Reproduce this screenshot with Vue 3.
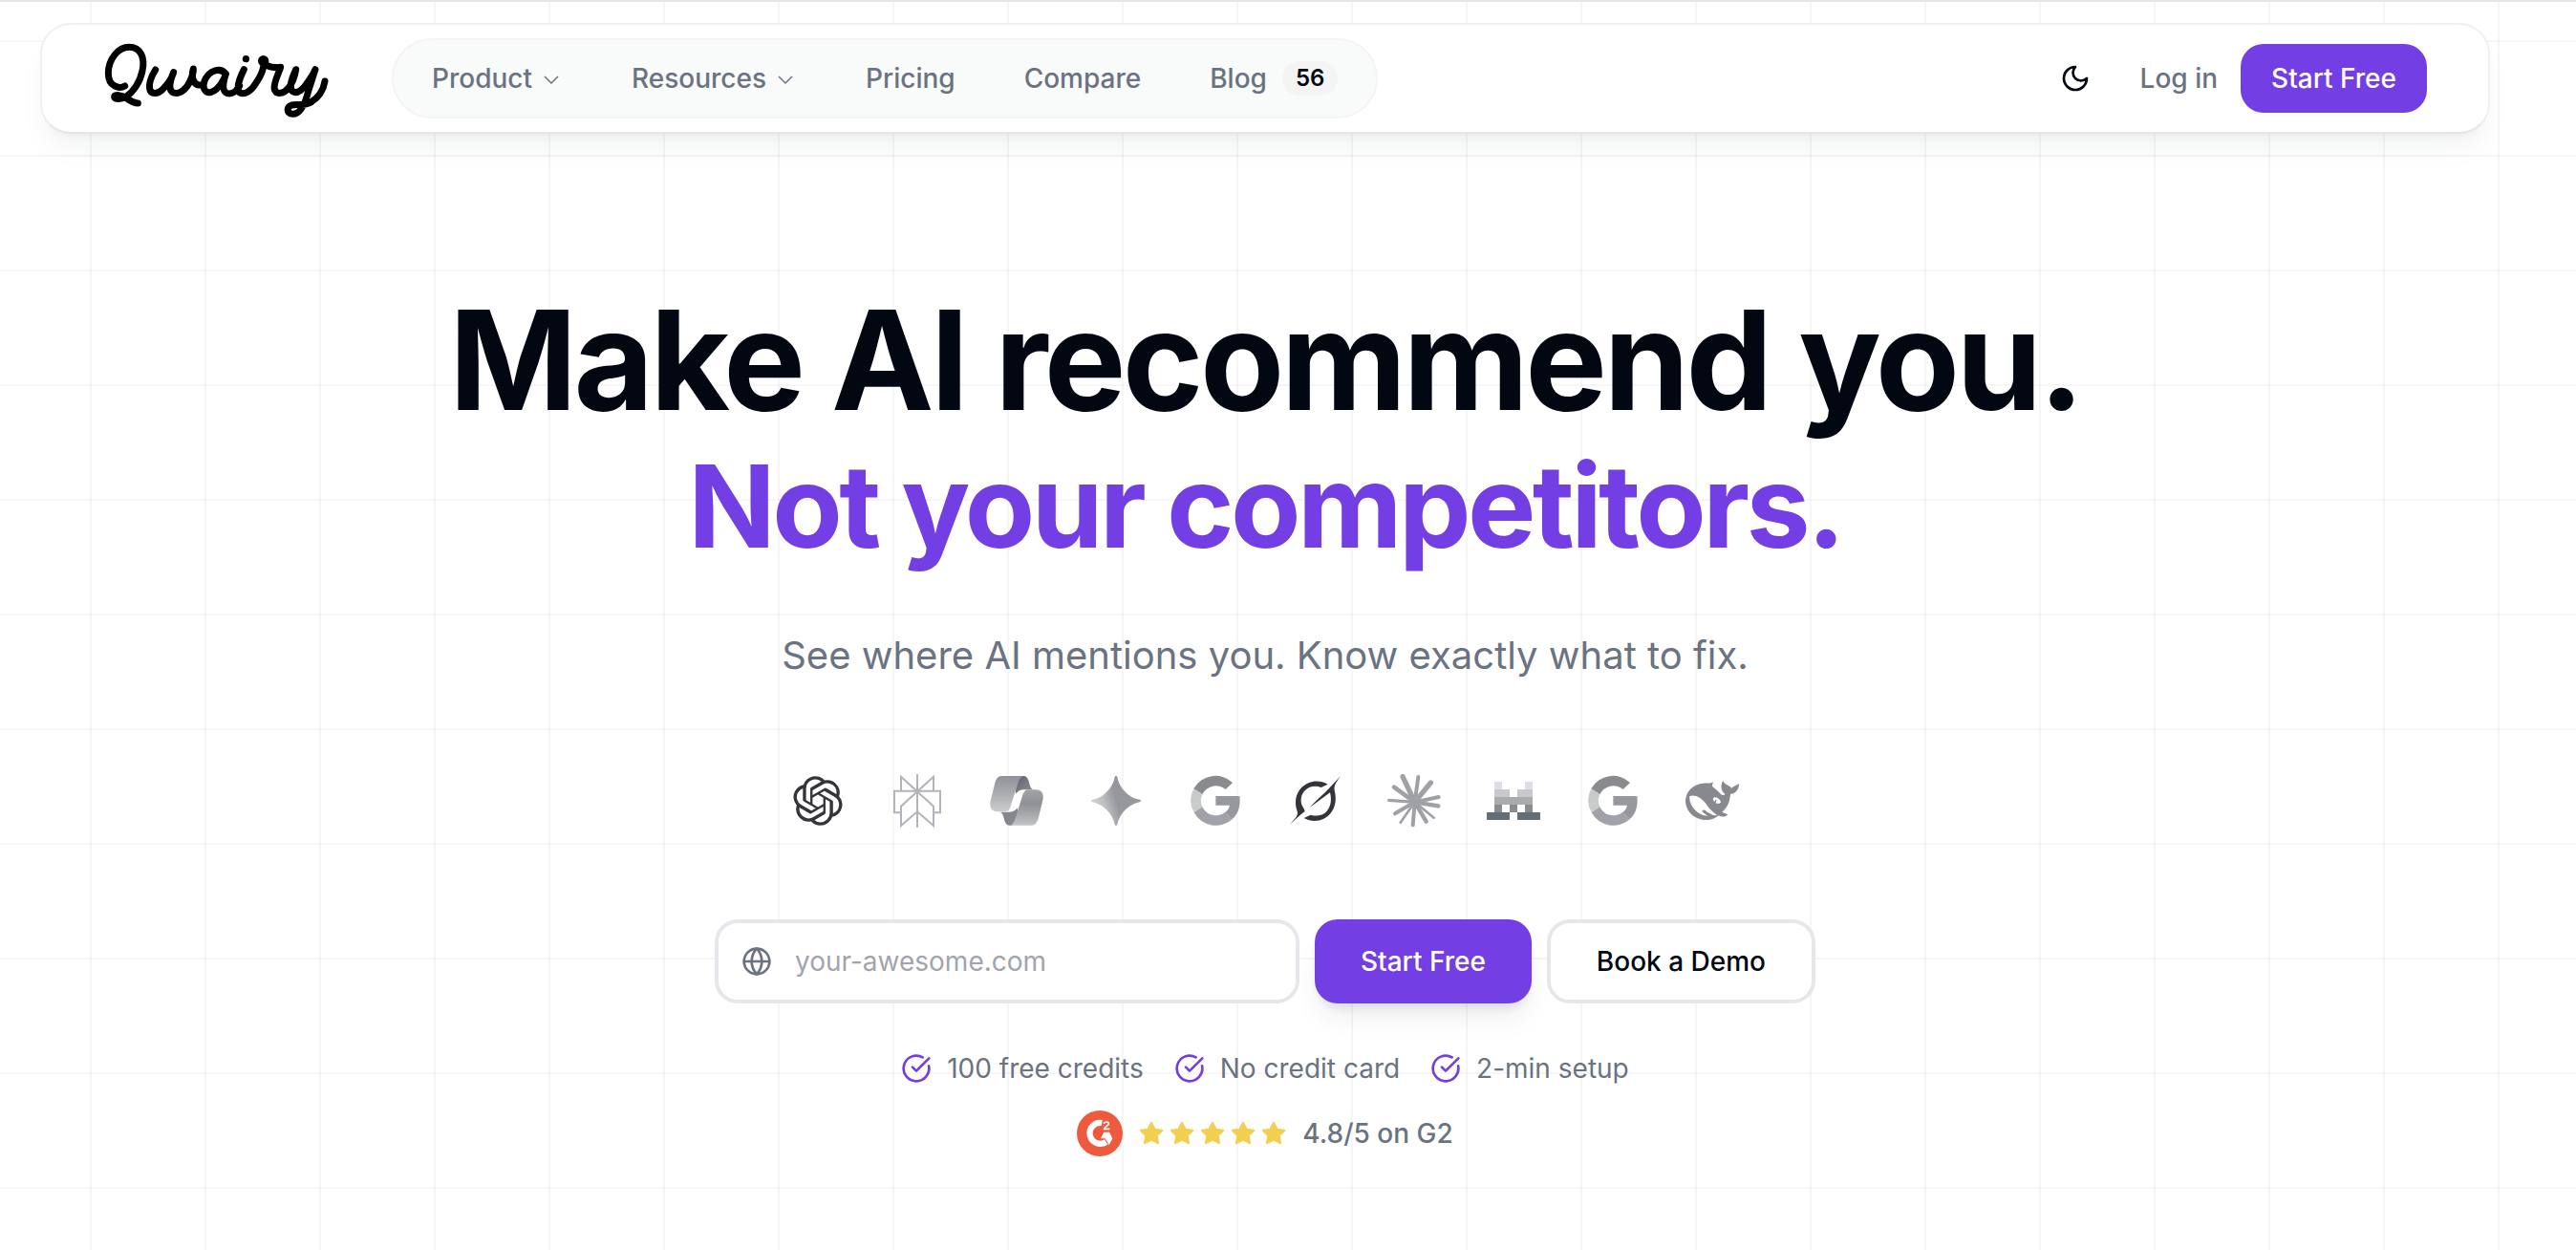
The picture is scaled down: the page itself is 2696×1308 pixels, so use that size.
<template>
  <div class="page">
    <header class="navbar">
      <a href="#" class="brand" aria-label="Qwairy">
        <svg viewBox="324 123 714 246" class="brand-logo" aria-hidden="true">
          <g class="brand-strokes">
            <path d="M392 270C376 279 340 274 340 230C340 185 372 148 405 148C442 148 456 182 447 222C440 258 418 288 398 302C382 312 359 314 359 304C359 296 382 297 398 309C411 318 424 324 433 324" />
            <path d="M488 219C474 242 467 264 470 279C474 299 497 294 510 281C525 266 540 246 545 227C534 252 526 284 545 291C566 298 588 276 597 254C604 238 608 226 607 216C600 240 606 270 632 267" />
            <path d="M709 232C692 210 656 220 642 254C634 280 646 294 664 289C688 280 704 250 709 232C702 254 694 286 714 293C730 297 744 284 752 270" />
            <path d="M766 218C755 240 740 278 752 290C768 300 790 284 804 260C822 234 830 212 828 192C834 212 858 213 881 211C872 238 857 264 862 281C868 299 892 294 906 276C918 260 926 238 929 218C916 246 906 274 919 287C934 297 954 278 966 258C978 242 986 228 990 218L968 286C956 334 940 359 918 358C899 356 899 336 916 330C932 326 950 334 976 321C1004 304 1016 280 1020 255" />
          </g>
          <circle cx="772" cy="185" r="11" />
          <circle cx="827" cy="191" r="17" />
        </svg>
      </a>

      <nav class="menu">
        <a v-for="item in menuItems" :key="item.label" href="#" class="menu-item">
          {{ item.label }}
          <svg v-if="item.hasChildren" viewBox="0 0 24 24" class="chevron" aria-hidden="true">
            <path d="m5 10 7 7 7-7" />
          </svg>
          <span v-if="item.count" class="count">{{ item.count }}</span>
        </a>
      </nav>

      <div class="actions">
        <button type="button" class="theme-toggle" aria-label="Toggle theme">
          <svg viewBox="0 0 24 24" class="icon" aria-hidden="true">
            <path d="M12 3a6 6 0 0 0 9 9 9 9 0 1 1-9-9Z" />
          </svg>
        </button>
        <a href="#" class="login">Log in</a>
        <button type="button" class="btn btn-primary btn-nav">Start Free</button>
      </div>
    </header>

    <main class="hero">
      <h1 class="headline">
        <span class="headline-main">Make AI recommend you.</span>
        <span class="headline-accent">Not your competitors.</span>
      </h1>
      <p class="subtitle">See where AI mentions you. Know exactly what to fix.</p>

      <div class="engines">
        <!-- OpenAI -->
        <svg viewBox="-1 -1 26 26" class="engine" aria-hidden="true">
          <path fill="#34353b" d="M22.2819 9.8211a5.9847 5.9847 0 0 0-.5157-4.9108 6.0462 6.0462 0 0 0-6.5098-2.9A6.0651 6.0651 0 0 0 4.9807 4.1818a5.9847 5.9847 0 0 0-3.9977 2.9 6.0462 6.0462 0 0 0 .7427 7.0966 5.98 5.98 0 0 0 .511 4.9107 6.051 6.051 0 0 0 6.5146 2.9001A5.9847 5.9847 0 0 0 13.2599 24a6.0557 6.0557 0 0 0 5.7718-4.2058 5.9894 5.9894 0 0 0 3.9977-2.9001 6.0557 6.0557 0 0 0-.7475-7.0729zm-9.022 12.6081a4.4755 4.4755 0 0 1-2.8764-1.0408l.1419-.0804 4.7783-2.7582a.7948.7948 0 0 0 .3927-.6813v-6.7369l2.02 1.1686a.071.071 0 0 1 .038.052v5.5826a4.504 4.504 0 0 1-4.4945 4.4944zm-9.6607-4.1254a4.4708 4.4708 0 0 1-.5346-3.0137l.142.0852 4.783 2.7582a.7712.7712 0 0 0 .7806 0l5.8428-3.3685v2.3324a.0804.0804 0 0 1-.0332.0615L9.74 19.9502a4.4992 4.4992 0 0 1-6.1408-1.6464zM2.3408 7.8956a4.485 4.485 0 0 1 2.3655-1.9728V11.6a.7664.7664 0 0 0 .3879.6765l5.8144 3.3543-2.0201 1.1685a.0757.0757 0 0 1-.071 0l-4.8303-2.7865A4.504 4.504 0 0 1 2.3408 7.872zm16.5963 3.8558L13.1038 8.364 15.1192 7.2a.0757.0757 0 0 1 .071 0l4.8303 2.7913a4.4944 4.4944 0 0 1-.6765 8.1042v-5.6772a.79.79 0 0 0-.407-.667zm2.0107-3.0231l-.142-.0852-4.7735-2.7818a.7759.7759 0 0 0-.7854 0L9.409 9.2297V6.8974a.0662.0662 0 0 1 .0284-.0615l4.8303-2.7866a4.4992 4.4992 0 0 1 6.6802 4.66zM8.3065 12.863l-2.02-1.1638a.0804.0804 0 0 1-.038-.0567V6.0742a4.4992 4.4992 0 0 1 7.3757-3.4537l-.142.0805L8.704 5.459a.7948.7948 0 0 0-.3927.6813zm1.0976-2.3654l2.602-1.4998 2.6069 1.4998v2.9994l-2.5974 1.4997-2.6067-1.4997Z" />
        </svg>

        <!-- Perplexity -->
        <svg viewBox="366 60 168 168" class="engine" aria-hidden="true">
          <path fill="none" stroke="#b3b4ba" stroke-width="6" d="M450 60V228M399 113V68L450 115L501 68V113M398 181H378V113H522V181H502M450 115L399 161V222L450 178L501 222V161Z" />
        </svg>

        <!-- Copilot -->
        <svg viewBox="678 60 168 168" class="engine" aria-hidden="true">
          <defs>
            <linearGradient id="ribbonLeft" x1="0" y1="0" x2="0" y2="1">
              <stop offset="0" stop-color="#909297" />
              <stop offset="0.5" stop-color="#abadb1" />
              <stop offset="1" stop-color="#cbcccc" />
            </linearGradient>
            <linearGradient id="ribbonRight" x1="0" y1="0" x2="0" y2="1">
              <stop offset="0" stop-color="#a3a4a8" />
              <stop offset="0.4" stop-color="#8f9095" />
              <stop offset="1" stop-color="#c2c3c5" />
            </linearGradient>
            <linearGradient id="ribbonFold" x1="0" y1="0" x2="1" y2="1">
              <stop offset="0" stop-color="#5a5f6b" />
              <stop offset="1" stop-color="#94969b" />
            </linearGradient>
          </defs>
          <path fill="url(#ribbonFold)" d="M776 66H784C799 67 800 84 804 97C807 106 811 108 816 109H784C774 109 766 113 760 122L756 100Z" />
          <path fill="#85878c" d="M748 221H740C725 220 724 204 720 191C717 182 713 180 708 179H740C750 179 758 175 764 166L768 188Z" />
          <path fill="url(#ribbonLeft)" d="M715 66H784C770 69 766 88 760 108L744 158C739 173 735 178 722 178H702C682 178 676 164 680 145L692 95C697 76 702 66 715 66Z" />
          <path fill="url(#ribbonRight)" d="M809 221H740C754 218 758 199 764 179L780 129C785 114 789 109 802 109H822C842 109 848 123 844 142L832 192C827 211 822 221 809 221Z" />
        </svg>

        <!-- Gemini -->
        <svg viewBox="0 60 168 168" class="engine" aria-hidden="true">
          <defs>
            <linearGradient id="spark" x1="0" y1="0.6" x2="1" y2="0.3">
              <stop offset="0" stop-color="#d2d3d2" />
              <stop offset="0.25" stop-color="#bfc0c1" />
              <stop offset="0.5" stop-color="#96979c" />
              <stop offset="1" stop-color="#98999e" />
            </linearGradient>
          </defs>
          <path fill="url(#spark)" d="M84 66C88 66 89 71 90 77C97 105 123 131 152 139C158 140 162 141 162 144C162 147 158 148 152 149C123 157 97 183 90 211C89 217 88 222 84 222C80 222 79 217 78 211C71 183 45 157 16 149C10 148 6 147 6 144C6 141 10 140 16 139C45 131 71 105 78 77C79 71 80 66 84 66Z" />
        </svg>

        <!-- Google -->
        <svg viewBox="312 60 168 168" class="engine" aria-hidden="true">
          <path v-for="part in googleParts" :key="part.fill" :fill="part.fill" :d="part.d" />
        </svg>

        <!-- Grok -->
        <svg viewBox="624 60 168 168" class="engine" aria-hidden="true">
          <path fill="#34353b" d="M630 218C641 204 658 192 653 177C643 150 648 122 666 103C688 80 722 76 749 92L728 102C708 94 688 99 675 114C661 131 662 154 675 170L677 177C660 190 645 204 630 218Z" />
          <path fill="#34353b" d="M789 66C778 82 767 95 770 110C777 140 774 162 757 184C738 208 702 214 674 198L695 188C714 194 734 190 746 176C758 162 762 142 756 118L692 165C712 143 738 121 752 106Z" />
        </svg>

        <!-- Claude -->
        <svg viewBox="36 30 168 168" class="engine" aria-hidden="true">
          <g stroke="#9fa1a6" stroke-linecap="round">
            <line v-for="(ray, i) in claudeRays" :key="i" x1="122" y1="118" :x2="ray[0]" :y2="ray[1]" :stroke-width="ray[2]" />
          </g>
        </svg>

        <!-- Mistral -->
        <svg viewBox="228 60 168 168" class="engine" aria-hidden="true" shape-rendering="crispEdges">
          <path fill="#dfdde8" d="M252 84h24v24h-24zM348 84h24v24h-24z" />
          <path fill="#c8c9c8" d="M252 108h48v24h-48zM324 108h48v24h-48z" />
          <path fill="#a9abaf" d="M252 132h120v24h-120z" />
          <path fill="#8b8c90" d="M252 156h24v24h-24zM300 156h24v24h-24zM348 156h24v24h-24z" />
          <path fill="#666c78" d="M228 180h72v24h-72zM324 180h72v24h-72z" />
        </svg>

        <!-- Google AI -->
        <svg viewBox="312 60 168 168" class="engine" aria-hidden="true">
          <path v-for="part in googleParts" :key="part.fill" :fill="part.fill" :d="part.d" />
        </svg>

        <!-- DeepSeek -->
        <svg viewBox="852 60 168 168" class="engine" aria-hidden="true">
          <path fill="#88898e" d="M940 83C936 90 922 87 908 89C876 92 852 115 852 146C854 180 884 206 921 204C937 203 947 198 956 190C966 196 979 195 985 187C980 183 972 183 967 179C983 166 992 146 993 123C1008 121 1020 110 1020 90C1012 97 1003 96 997 104C990 95 974 93 970 81C961 96 963 113 976 122C974 127 968 128 962 122C954 113 944 106 937 99C934 94 938 90 940 83Z" />
          <path fill="#ffffff" d="M865 129C885 122 907 138 921 160C929 173 942 182 951 189C940 193 930 182 920 179C914 172 907 170 904 176C909 182 916 186 922 192C890 190 861 158 865 129Z" />
          <path fill="#ffffff" d="M940 134C948 130 961 138 963 148C960 155 950 153 946 150C949 147 950 143 949 140C946 140 944 143 944 147C939 143 937 138 940 134Z" />
        </svg>
      </div>

      <form class="signup" @submit.prevent>
        <label class="domain-field">
          <svg viewBox="0 0 24 24" class="icon" aria-hidden="true">
            <circle cx="12" cy="12" r="10" />
            <path d="M12 2a14.5 14.5 0 0 0 0 20 14.5 14.5 0 0 0 0-20M2 12h20" />
          </svg>
          <input
            v-model="domain"
            type="text"
            class="domain-input"
            placeholder="your-awesome.com"
            aria-label="Your website"
          />
        </label>
        <button type="submit" class="btn btn-primary btn-large">Start Free</button>
        <button type="button" class="btn btn-outline">Book a Demo</button>
      </form>

      <ul class="perks">
        <li v-for="perk in perks" :key="perk" class="perk">
          <svg viewBox="0 0 24 24" class="icon perk-icon" aria-hidden="true">
            <path d="M21.801 10A10 10 0 1 1 17 3.335" />
            <path d="m9 11 3 3L22 4" />
          </svg>
          {{ perk }}
        </li>
      </ul>

      <div class="rating">
        <svg viewBox="24 36 144 144" class="g2-logo" aria-hidden="true">
          <circle cx="96" cy="108" r="72" fill="#ef5a3e" />
          <path fill="none" stroke="#ffffff" stroke-width="19" d="M103 75A33 33 0 1 0 116 135" />
          <path fill="#ffffff" d="M109 104H126L136 124L125 145L113 124H99Z" />
          <path fill="none" stroke="#ffffff" stroke-width="5" d="M109 78C110 70 125 70 124 78C123 84 111 87 110 94H127" />
        </svg>
        <div class="stars">
          <svg v-for="n in 5" :key="n" viewBox="0 0 24 24" class="star" aria-hidden="true">
            <path d="M12 2.5l2.9 5.900 6.600.9-4.800 4.600 1.200 6.600-5.900-3.200-5.900 3.200 1.200-6.600L2.500 9.300l6.600-.9z" />
          </svg>
        </div>
        <span class="rating-text">4.8/5 on G2</span>
      </div>
    </main>
  </div>
</template>

<script setup>
import { ref } from 'vue'

const domain = ref('')

const menuItems = [
  { label: 'Product', hasChildren: true },
  { label: 'Resources', hasChildren: true },
  { label: 'Pricing' },
  { label: 'Compare' },
  { label: 'Blog', count: 56 }
]

const perks = ['100 free credits', 'No credit card', '2-min setup']

const googleParts = [
  { fill: '#8a8b8f', d: 'M450 87A78 78 0 0 0 328 106L355 124A47 47 0 0 1 428 108Z' },
  { fill: '#c9caca', d: 'M328 106A78 78 0 0 0 329 181L355 163A47 47 0 0 1 355 124Z' },
  { fill: '#a0a2a7', d: 'M329 181A78 78 0 0 0 450 201L425 181A47 47 0 0 1 355 163Z' },
  { fill: '#97989d', d: 'M397 129H472C475 152 472 181 450 201L425 181C433 176 439 168 441 158H397Z' }
]

// [x, y, thickness] of each ray's outer end
const claudeRays = [
  [84, 38, 16],
  [57, 71, 14],
  [133, 39, 12],
  [172, 57, 16],
  [197, 102, 12],
  [196, 130, 13],
  [182, 167, 8],
  [158, 179, 13],
  [116, 190, 12],
  [77, 182, 8],
  [60, 154, 12],
  [41, 112, 10]
]
</script>

<style>
body {
  margin: 0;
  background: #FFFFFF;
}
</style>

<style scoped>
.page {
  box-sizing: border-box;
  min-height: 100vh;
  padding: 22px 48px 96px 0;
  border-top: 2px solid #E5E5EC;
  font-family: Inter, "Liberation Sans", sans-serif;
  font-size: 28px;
  line-height: 40px;
  color: #030711;
  background-color: #FFFFFF;
  background-image:
    linear-gradient(to right, rgba(0, 0, 20, 0.035) 2px, transparent 2px),
    linear-gradient(to bottom, rgba(0, 0, 20, 0.035) 2px, transparent 2px);
  background-size: 120px 120px;
  background-position: 94px 40px;
}

a {
  color: inherit;
  text-decoration: none;
}

button,
input {
  font: inherit;
}

.icon {
  width: 32px;
  height: 32px;
  flex-shrink: 0;
  fill: none;
  stroke: currentColor;
  stroke-width: 2;
  stroke-linecap: round;
  stroke-linejoin: round;
}

/* navbar */
.navbar {
  box-sizing: border-box;
  display: flex;
  align-items: center;
  max-width: 2564px;
  min-height: 116px;
  margin: 0 auto;
  padding: 0 64px;
  background: #FFFFFF;
  border: 2px solid #F0F0F2;
  border-bottom-color: #E5E5EC;
  border-radius: 32px;
  box-shadow: 0 20px 30px -6px rgba(20, 40, 30, 0.05), 0 8px 12px -8px rgba(0, 0, 0, 0.07);
}

.brand {
  display: flex;
  margin-right: 64px;
}

.brand-logo {
  width: 238px;
  height: 82px;
}

.brand-strokes {
  fill: none;
  stroke: #000000;
  stroke-width: 21;
  stroke-linecap: round;
  stroke-linejoin: round;
}

.menu {
  display: flex;
  gap: 8px;
  padding: 8px;
  background: #F9FAFA;
  border: 2px solid #F4F4F5;
  border-radius: 42px;
}

.menu-item {
  display: flex;
  align-items: center;
  gap: 8px;
  padding: 12px 32px;
  font-weight: 500;
  color: #6B7280;
}

.chevron {
  width: 24px;
  height: 24px;
  fill: none;
  stroke: currentColor;
  stroke-width: 1.5;
}

.count {
  margin-left: 8px;
  padding: 2px 14px;
  font-size: 24px;
  line-height: 32px;
  font-weight: 600;
  color: #030711;
  background: #F4F4F4;
  border-radius: 18px;
}

.actions {
  display: flex;
  align-items: center;
  margin-left: auto;
}

.theme-toggle {
  display: flex;
  align-items: center;
  justify-content: center;
  width: 72px;
  height: 72px;
  margin-right: 32px;
  padding: 0;
  color: #030711;
  background: none;
  border: 0;
  border-radius: 24px;
  cursor: pointer;
}

.login {
  margin-right: 24px;
  font-weight: 500;
  color: #6B7280;
}

.btn {
  box-sizing: border-box;
  font-weight: 500;
  border: 0;
  border-radius: 24px;
  cursor: pointer;
  white-space: nowrap;
}

.btn-primary {
  color: #FFFFFF;
  background: #733EE4;
}

.btn-nav {
  height: 72px;
  padding: 0 32px;
}

.btn-large {
  padding: 0 48px;
  box-shadow: 0 20px 30px -6px rgba(20, 40, 30, 0.08), 0 8px 12px -6px rgba(30, 20, 80, 0.14);
}

.btn-outline {
  padding: 0 48px;
  color: #030711;
  background: #FFFFFF;
  border: 4px solid #E5E7EB;
}

/* hero */
.hero {
  display: flex;
  flex-direction: column;
  align-items: center;
  padding-top: 158px;
}

.headline {
  display: flex;
  flex-direction: column;
  align-items: center;
  gap: 8px;
  margin: 0;
  font-size: 144px;
  line-height: 158px;
  font-weight: 700;
  letter-spacing: -0.025em;
  text-align: center;
}

.headline-accent {
  font-size: 120px;
  line-height: 132px;
  color: #733EE4;
}

.subtitle {
  margin: 62px 0 0;
  font-size: 40px;
  line-height: 56px;
  color: #6B7280;
}

.engines {
  display: flex;
  gap: 48px;
  margin-top: 96px;
}

.engine {
  width: 56px;
  height: 56px;
}

.signup {
  display: flex;
  gap: 16px;
  width: 100%;
  max-width: 1152px;
  height: 88px;
  margin-top: 96px;
}

.domain-field {
  box-sizing: border-box;
  display: flex;
  flex: 1;
  align-items: center;
  gap: 24px;
  min-width: 0;
  padding: 0 24px;
  color: #6B7280;
  background: #FFFFFF;
  border: 4px solid #E5E7EB;
  border-radius: 24px;
}

.domain-input {
  flex: 1;
  min-width: 0;
  padding: 0;
  color: #030711;
  background: none;
  border: 0;
  outline: none;
}

.domain-input::placeholder {
  color: #A1A5AB;
  opacity: 1;
}

.perks {
  display: flex;
  gap: 32px;
  margin: 48px 0 0;
  padding: 0;
  list-style: none;
  color: #6B7280;
}

.perk {
  display: flex;
  align-items: center;
  gap: 16px;
}

.perk-icon {
  color: #733EE4;
}

.rating {
  display: flex;
  align-items: center;
  gap: 16px;
  margin-top: 24px;
}

.g2-logo {
  width: 48px;
  height: 48px;
}

.stars {
  display: flex;
  gap: 4px;
}

.star {
  width: 28px;
  height: 28px;
  fill: #F4CE4F;
  stroke: #F4CE4F;
  stroke-width: 2;
  stroke-linejoin: round;
}

.rating-text {
  font-weight: 500;
  color: #6B7280;
}
</style>
